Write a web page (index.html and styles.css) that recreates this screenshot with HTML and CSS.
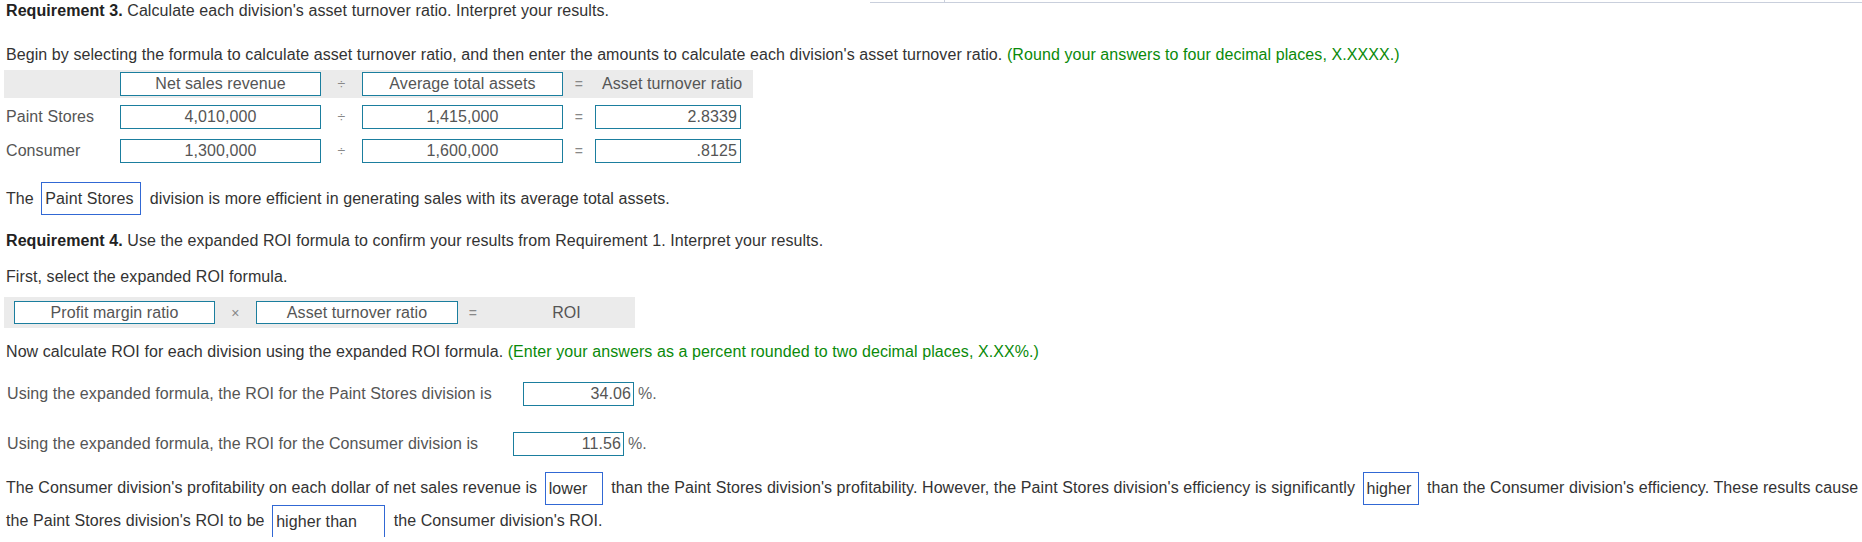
FILE: index.html
```html
<!DOCTYPE html>
<html lang="en">
<head>
  <meta charset="UTF-8">
  <title>Requirement 3 and 4</title>
  <link rel="stylesheet" href="styles.css">
</head>
<body>
  <div class="topline"><span class="tick"></span></div>

  <div class="page">
    <p class="req req3"><strong>Requirement 3.</strong> Calculate each division's asset turnover ratio. Interpret your results.</p>

    <p class="intro">Begin by selecting the formula to calculate asset turnover ratio, and then enter the amounts to calculate each division's asset turnover ratio. <span class="hint">(Round your answers to four decimal places, X.XXXX.)</span></p>

    <div class="ratio-table">
      <div class="row head">
        <div class="label"></div>
        <div class="box center">Net sales revenue</div>
        <div class="op">&divide;</div>
        <div class="box center">Average total assets</div>
        <div class="op">=</div>
        <div class="result-head">Asset turnover ratio</div>
      </div>
      <div class="row">
        <div class="label">Paint Stores</div>
        <div class="box center">4,010,000</div>
        <div class="op">&divide;</div>
        <div class="box center">1,415,000</div>
        <div class="op">=</div>
        <div class="box result">2.8339</div>
      </div>
      <div class="row">
        <div class="label">Consumer</div>
        <div class="box center">1,300,000</div>
        <div class="op">&divide;</div>
        <div class="box center">1,600,000</div>
        <div class="op">=</div>
        <div class="box result">.8125</div>
      </div>
    </div>

    <p class="line efficient">The <span class="pick w-paint">Paint Stores</span> division is more efficient in generating sales with its average total assets.</p>

    <p class="req req4"><strong>Requirement 4.</strong> Use the expanded ROI formula to confirm your results from Requirement 1. Interpret your results.</p>

    <p class="first">First, select the expanded ROI formula.</p>

    <div class="roi-formula">
      <div class="box center">Profit margin ratio</div>
      <div class="op">&times;</div>
      <div class="box center">Asset turnover ratio</div>
      <div class="op">=</div>
      <div class="roi">ROI</div>
    </div>

    <p class="now">Now calculate ROI for each division using the expanded ROI formula. <span class="hint">(Enter your answers as a percent rounded to two decimal places, X.XX%.)</span></p>

    <div class="roi-row paint">
      <span class="q">Using the expanded formula, the ROI for the Paint Stores division is</span>
      <span class="box result pct">34.06</span>
      <span class="unit">%.</span>
    </div>

    <div class="roi-row consumer">
      <span class="q">Using the expanded formula, the ROI for the Consumer division is</span>
      <span class="box result pct">11.56</span>
      <span class="unit">%.</span>
    </div>

    <div class="closing">
      <div class="cline">The Consumer division's profitability on each dollar of net sales revenue is <span class="pick w-lower">lower</span> than the Paint Stores division's profitability. However, the Paint Stores division's efficiency is significantly <span class="pick w-higher">higher</span> than the Consumer division's efficiency. These results cause</div>
      <div class="cline">the Paint Stores division's ROI to be <span class="pick w-than">higher than</span> the Consumer division's ROI.</div>
    </div>
  </div>
</body>
</html>
```

FILE: styles.css
```css
body {
  margin: 0;
  font-family: 'Liberation Sans', Arial, sans-serif;
  font-size: 16px;
  letter-spacing: 0.08px;
  color: #333;
  background: #fff;
}

.topline {
  position: relative;
  height: 2px;
  margin-left: 870px;
  border-bottom: 1px solid #c9cfdc;
}

.topline .tick {
  position: absolute;
  left: 74px;
  top: 0;
  width: 1px;
  height: 3px;
  background: #c9cfdc;
}

.page {
  padding-left: 6px;
}

p {
  margin: 0;
}

.req strong {
  font-weight: bold;
  color: #222;
}

.req3 {
  line-height: 18px;
  margin-top: -1px;
}

.intro {
  margin-top: 26px;
  line-height: 18px;
}

.hint {
  color: #0a8a0a;
}

/* asset turnover table */
.ratio-table {
  margin-top: 6px;
  margin-left: -2px;
}

.row {
  display: grid;
  grid-template-columns: 116px 201px 41px 201px 32px 158px;
  align-items: center;
  height: 34px;
}

.row.head {
  width: 749px;
  height: 28px;
  margin-bottom: 2px;
  background: #ebebeb;
}

.label {
  padding-left: 2px;
  color: #555;
}

.box {
  box-sizing: border-box;
  height: 24px;
  line-height: 22px;
  border: 1px solid #1b7e9e;
  background: #fff;
  color: #555;
  white-space: nowrap;
}

.center {
  text-align: center;
}

.result {
  text-align: right;
  padding-right: 3px;
}

.row .box.result {
  width: 146px;
}

.op {
  text-align: center;
  color: #888;
  font-size: 14px;
}

.result-head {
  padding-left: 7px;
  color: #555;
}

.efficient {
  margin-top: 14px;
  line-height: 34px;
}

.pick {
  display: inline-block;
  box-sizing: border-box;
  height: 33px;
  line-height: 31px;
  border: 1px solid #3168d4;
  padding-left: 3px;
  vertical-align: middle;
  margin: 0 4px 0 3px;
  color: #333;
  position: relative;
  top: -1px;
}

.w-paint { width: 100px; }
.w-lower { width: 58px; }
.w-higher { width: 56px; }
.w-than { width: 113px; }

.req4 {
  margin-top: 16px;
  line-height: 18px;
}

.first {
  margin-top: 18px;
  line-height: 18px;
}

/* expanded ROI formula */
.roi-formula {
  display: grid;
  grid-template-columns: 201px 41px 202px 30px 1fr;
  align-items: center;
  width: 621px;
  height: 31px;
  margin-top: 11px;
  margin-left: -2px;
  padding-left: 10px;
  background: #ebebeb;
}

.roi-formula .box {
  height: 23px;
  line-height: 21px;
  margin-top: -1px;
}

.roi {
  text-align: center;
  color: #555;
  padding-left: 10px;
}

.now {
  margin-top: 15px;
  line-height: 18px;
}

.roi-row {
  display: flex;
  align-items: center;
  height: 24px;
  color: #555;
}

.roi-row.paint {
  margin-top: 21px;
}

.roi-row.consumer {
  margin-top: 26px;
}

.roi-row .q {
  padding-left: 1px;
}

.paint .q { width: 516px; }
.consumer .q { width: 506px; }

.pct {
  width: 111px;
  padding-right: 2px;
}

.unit {
  margin-left: 4px;
  color: #666;
}

.closing {
  margin-top: 15px;
}

.cline {
  white-space: nowrap;
  height: 33px;
  line-height: 33px;
}
```
